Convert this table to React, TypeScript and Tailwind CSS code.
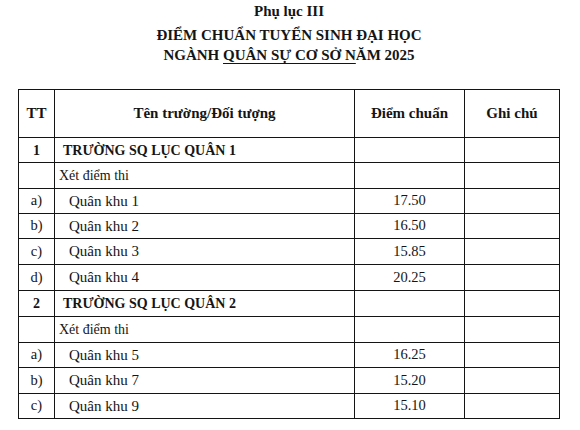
import React from "react";

type Row =
  | { kind: "school"; tt: string; name: string; h: number }
  | { kind: "sub"; name: string; h: number }
  | { kind: "item"; tt: string; name: string; score: string; h: number };

const rows: Row[] = [
  { kind: "school", tt: "1", name: "TRƯỜNG SQ LỤC QUÂN 1", h: 25 },
  { kind: "sub", name: "Xét điểm thi", h: 26 },
  { kind: "item", tt: "a)", name: "Quân khu 1", score: "17.50", h: 25 },
  { kind: "item", tt: "b)", name: "Quân khu 2", score: "16.50", h: 25 },
  { kind: "item", tt: "c)", name: "Quân khu 3", score: "15.85", h: 26 },
  { kind: "item", tt: "d)", name: "Quân khu 4", score: "20.25", h: 26 },
  { kind: "school", tt: "2", name: "TRƯỜNG SQ LỤC QUÂN 2", h: 26 },
  { kind: "sub", name: "Xét điểm thi", h: 26 },
  { kind: "item", tt: "a)", name: "Quân khu 5", score: "16.25", h: 25 },
  { kind: "item", tt: "b)", name: "Quân khu 7", score: "15.20", h: 26 },
  { kind: "item", tt: "c)", name: "Quân khu 9", score: "15.10", h: 25 },
];

const cell = "border-r border-b border-[#141414] flex items-center";

export default function App() {
  return (
    <div
      className="w-[580px] h-[430px] bg-white text-[#151515] overflow-hidden"
      style={{ fontFamily: '"Liberation Serif", "Times New Roman", serif' }}
    >
      <div className="w-[542px] ml-[18px] pt-[1px] flex flex-col items-center">
        <div className="text-[15px] leading-[20px] font-bold">Phụ lục III</div>
        <div className="mt-[4px] text-[15px] leading-[20px] font-bold text-center">
          <div>ĐIỂM CHUẨN TUYỂN SINH ĐẠI HỌC</div>
          <div>
            NGÀNH{" "}
            <span className="underline decoration-1 underline-offset-[3px]">QUÂN SỰ CƠ SỞ N</span>
            ĂM 2025
          </div>
        </div>
      </div>
      <div className="ml-[18px] mt-[24px] w-[542px] border-l border-t border-[#141414] grid grid-cols-[36px_300px_110px_95px]">
        <div className={`${cell} h-[48px] justify-center text-[15px] font-bold`}>TT</div>
        <div className={`${cell} h-[48px] justify-center text-[15px] font-bold`}>Tên trường/Đối tượng</div>
        <div className={`${cell} h-[48px] justify-center text-[15px] font-bold`}>Điểm chuẩn</div>
        <div className={`${cell} h-[48px] justify-center text-[15px] font-bold`}>Ghi chú</div>
        {rows.map((r, i) => (
          <React.Fragment key={i}>
            <div
              className={`${cell} justify-center ${r.kind === "school" ? "font-bold text-[14px]" : "text-[14.5px]"}`}
              style={{ height: r.h }}
            >
              {r.kind === "sub" ? "" : r.tt}
            </div>
            <div className={cell} style={{ height: r.h }}>
              {r.kind === "school" && <span className="pl-[8px] font-bold text-[14px]">{r.name}</span>}
              {r.kind === "sub" && <span className="pl-[4px] text-[14px]">{r.name}</span>}
              {r.kind === "item" && <span className="pl-[14px] text-[15px]">{r.name}</span>}
            </div>
            <div className={`${cell} justify-center text-[14.5px]`} style={{ height: r.h }}>
              {r.kind === "item" ? r.score : ""}
            </div>
            <div className={cell} style={{ height: r.h }}></div>
          </React.Fragment>
        ))}
      </div>
    </div>
  );
}
